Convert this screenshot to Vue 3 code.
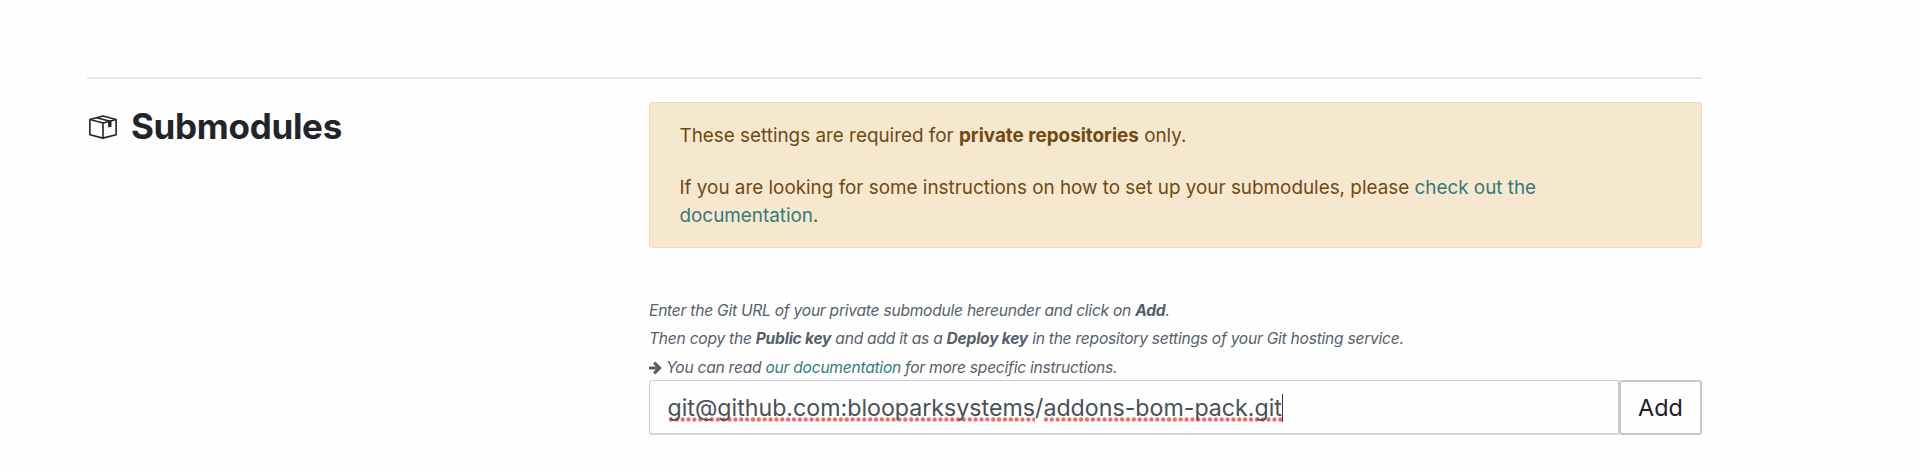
<script setup>
import { ref } from "vue";

const urlParts = ref([
  { text: "git@github.com:blooparksystems", misspelled: true },
  { text: "/", misspelled: false },
  { text: "addons-bom-pack.git", misspelled: true },
]);
</script>

<template>
  <section class="submodules">
    <div class="title">
      <svg class="box-icon" viewBox="0 0 28 24" fill="none" stroke="currentColor" stroke-width="1.6" stroke-linejoin="round">
        <path d="M.9 4.4 14 .9l13.1 3.5v15.4L14 23.1.9 19.8z" />
        <path d="M.9 4.4 14 8.1l13.1-3.7M14 8.1v15" />
        <path d="M7.4 2.8 20.4 6" />
        <path d="M18.9 5.7 22.5 4.9v6.8l-3.2.7z" fill="currentColor" stroke="none" />
      </svg>
      <h2>Submodules</h2>
    </div>

    <div class="content">
      <div class="alert">
        <p>These settings are required for <strong>private repositories</strong> only.</p>
        <p>
          If you are looking for some instructions on how to set up your submodules, please
          <a href="#">check out the<br />documentation</a>.
        </p>
      </div>

      <div class="help">
        <p>Enter the Git URL of your private submodule hereunder and click on <strong>Add</strong>.</p>
        <p>Then copy the <strong>Public key</strong> and add it as a <strong>Deploy key</strong> in the repository settings of your Git hosting service.</p>
        <p>
          <svg class="arrow" viewBox="0 0 13 14" fill="none" stroke="currentColor" stroke-width="3.2">
            <path d="M0 7h10.5M5.2 1.6 10.6 7l-5.4 5.4" />
          </svg>
          You can read <a href="#">our documentation</a> for more specific instructions.
        </p>
      </div>

      <div class="form">
        <div class="field">
          <span v-for="part in urlParts" :key="part.text" :class="{ misspelled: part.misspelled }">{{ part.text }}</span>
          <span class="caret"></span>
        </div>
        <button class="btn">Add</button>
      </div>
    </div>
  </section>
</template>

<style>
body {
  background-color: #fefefe;
}
</style>

<style scoped>
.submodules {
  display: flex;
  width: 1615px;
  margin: 77px 0 0 87px;
  padding-top: 23px;
  border-top: 2px solid #e6e7e8;
  font-family: Inter, sans-serif;
  color: #212529;
}

.title {
  display: flex;
  align-items: flex-start;
  width: 562px;
}

.box-icon {
  width: 28px;
  height: 24px;
  margin: 13px 14px 0 2px;
}

h2 {
  margin: 3px 0 0;
  font-size: 35px;
  font-weight: 700;
  line-height: 42px;
  letter-spacing: -0.3px;
}

.content {
  width: 1053px;
}

a {
  color: #35797a;
  text-decoration: none;
}

strong {
  font-weight: 650;
}

.alert {
  height: 146px;
  box-sizing: border-box;
  padding: 19px 29.5px 0;
  border: 1px solid #efdab8;
  border-radius: 3px;
  background-color: #f6e8cf;
  color: #704812;
  font-size: 18.88px;
  line-height: 28px;
}

.alert p {
  margin: 0 0 24px;
}

.help {
  height: 83px;
  margin-top: 49px;
  font-size: 15.6px;
  font-style: italic;
  line-height: 28.33px;
  letter-spacing: -0.25px;
  color: #565e6c;
}

.help p {
  margin: 0;
}

.arrow {
  width: 13px;
  height: 14px;
  vertical-align: -2px;
}

.form {
  display: flex;
  height: 55px;
}

.field {
  display: flex;
  align-items: center;
  flex: 1;
  padding: 2px 0 0 17.5px;
  border: 1px solid #c8cbcf;
  border-bottom-width: 2px;
  border-bottom-color: #d4d7da;
  border-radius: 3px 0 0 3px;
  font-size: 23.2px;
  color: #495057;
}

.misspelled {
  background-image: radial-gradient(circle, #ef7068 1.9px, transparent 2.4px);
  background-repeat: repeat-x;
  background-position: 0 100%;
  background-size: 5.87px 5px;
}

.caret {
  width: 1px;
  height: 28px;
  background-color: #343a46;
}

.btn {
  width: 83px;
  padding: 0;
  border: 2px solid #c3c8cc;
  border-radius: 3px;
  background-color: #fefefe;
  font-family: inherit;
  font-size: 23.4px;
  color: #1c2026;
}
</style>
